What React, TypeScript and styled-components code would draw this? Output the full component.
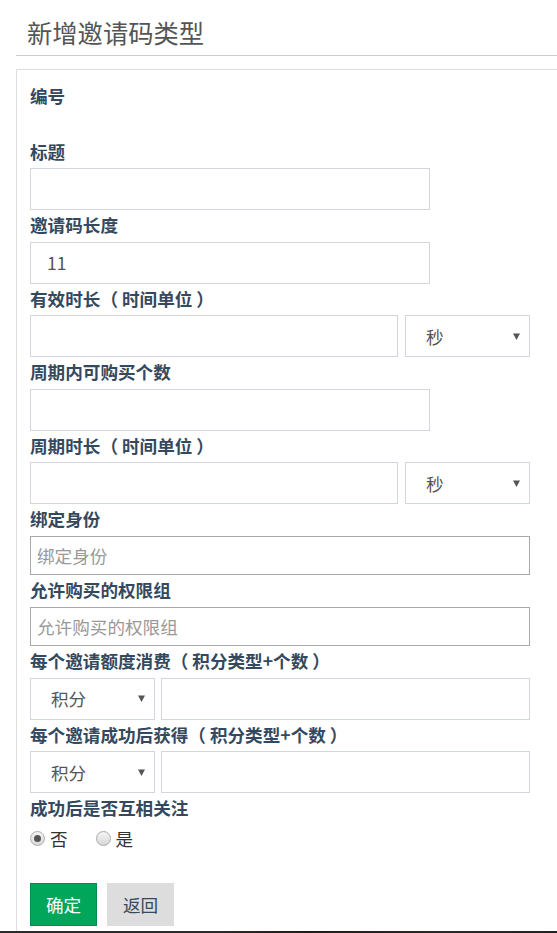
import React from "react";
import styled, { createGlobalStyle } from "styled-components";

const Global = createGlobalStyle`
  html, body { margin: 0; padding: 0; background: #fff; }
  body { font-family: "Noto Sans CJK SC", "Microsoft YaHei", sans-serif; overflow: hidden; }
  * { box-sizing: border-box; }
`;

const Header = styled.div`
  margin-left: 16px;
  padding: 19px 0 0 11px;
  height: 56px;
  border-bottom: 1px solid #cccccc;
`;

const Title = styled.h1`
  margin: 0;
  font-size: 25.3px;
  line-height: 26px;
  font-weight: 400;
  color: #555;
`;

const Card = styled.div`
  margin: 13px 0 0 16px;
  border-top: 1px solid #dddddd;
  border-left: 1px solid #dddddd;
  padding: 11px 0 5px 13px;
`;

const Label = styled.div`
  font-size: 17.6px;
  line-height: 22.5px;
  font-weight: 700;
  color: #34495e;
  margin: 4px 0 5px;
  white-space: pre;
`;

const EmptyValue = styled.div`
  height: 24px;
`;

const TextInput = styled.div<{ $w?: number; $h?: number; $dark?: boolean; $pad?: number }>`
  width: ${(p) => (p.$w ? `${p.$w}px` : "auto")};
  flex: ${(p) => (p.$w ? "none" : "1")};
  height: ${(p) => p.$h ?? 42}px;
  border: 1px solid ${(p) => (p.$dark ? "#a9a9a9" : "#d2d6de")};
  padding-left: ${(p) => p.$pad ?? 16}px;
  display: flex;
  align-items: center;
  font-size: 17.6px;
  color: #555;
`;

const Placeholder = styled.span`
  color: #999;
`;

const Row = styled.div<{ $gap: number }>`
  width: 500px;
  display: flex;
  gap: ${(p) => p.$gap}px;
`;

const Select = styled.div`
  width: 125px;
  flex: none;
  height: 42px;
  border: 1px solid #d2d6de;
  padding: 0 9px 0 20px;
  display: flex;
  align-items: center;
  justify-content: space-between;
  font-size: 17.6px;
  color: #555;
`;

const Caret = () => (
  <svg width="7" height="7" viewBox="0 0 7 7">
    <path d="M0 0.5 L7 0.5 L3.5 7 Z" fill="#555" />
  </svg>
);

const RadioRow = styled.div`
  height: 28px;
  display: flex;
  align-items: center;
  gap: 28px;
`;

const RadioItem = styled.label`
  display: flex;
  align-items: center;
  gap: 5px;
  font-size: 17.6px;
  color: #333;
`;

const RadioCircle = styled.span<{ $checked?: boolean }>`
  width: 15px;
  height: 15px;
  border-radius: 50%;
  border: 1px solid #aaa;
  background: linear-gradient(#f4f4f4, #d8d8d8);
  display: flex;
  align-items: center;
  justify-content: center;
  &::after {
    content: "";
    display: ${(p) => (p.$checked ? "block" : "none")};
    width: 7px;
    height: 7px;
    border-radius: 50%;
    background: #555;
  }
`;

const Buttons = styled.div`
  margin-top: 30.5px;
  display: flex;
  gap: 10px;
`;

const Button = styled.button<{ $primary?: boolean }>`
  width: 67px;
  height: 43px;
  font-family: inherit;
  font-size: 17.6px;
  border: 1px solid ${(p) => (p.$primary ? "#008d4c" : "#dddddd")};
  background: ${(p) => (p.$primary ? "#00a65a" : "#dddddd")};
  color: ${(p) => (p.$primary ? "#fff" : "#34495e")};
  padding: 0;
  border-radius: 0;
`;

const BottomStrip = styled.div`
  height: 10px;
  background: linear-gradient(90deg, #2b2b2b 0%, #2b2b2b 40%, #1f1c15 55%, #2a2a2a 80%, #222 100%);
`;

export default function App() {
  return (
    <>
      <Global />
      <Header>
        <Title>新增邀请码类型</Title>
      </Header>
      <Card>
        <Label>编号</Label>
        <EmptyValue />
        <Label>标题</Label>
        <TextInput $w={400} />
        <Label>邀请码长度</Label>
        <TextInput $w={400}>11</TextInput>
        <Label>有效时长（ 时间单位 ）</Label>
        <Row $gap={7}>
          <TextInput />
          <Select>
            <span>秒</span>
            <Caret />
          </Select>
        </Row>
        <Label>周期内可购买个数</Label>
        <TextInput $w={400} />
        <Label>周期时长（ 时间单位 ）</Label>
        <Row $gap={7}>
          <TextInput />
          <Select>
            <span>秒</span>
            <Caret />
          </Select>
        </Row>
        <Label>绑定身份</Label>
        <TextInput $w={500} $h={39.5} $dark $pad={6}>
          <Placeholder>绑定身份</Placeholder>
        </TextInput>
        <Label>允许购买的权限组</Label>
        <TextInput $w={500} $h={39.5} $dark $pad={6}>
          <Placeholder>允许购买的权限组</Placeholder>
        </TextInput>
        <Label>每个邀请额度消费（ 积分类型+个数 ）</Label>
        <Row $gap={6}>
          <Select>
            <span>积分</span>
            <Caret />
          </Select>
          <TextInput />
        </Row>
        <Label>每个邀请成功后获得（ 积分类型+个数 ）</Label>
        <Row $gap={6}>
          <Select>
            <span>积分</span>
            <Caret />
          </Select>
          <TextInput />
        </Row>
        <Label>成功后是否互相关注</Label>
        <RadioRow>
          <RadioItem>
            <RadioCircle $checked />否
          </RadioItem>
          <RadioItem>
            <RadioCircle />是
          </RadioItem>
        </RadioRow>
        <Buttons>
          <Button $primary>确定</Button>
          <Button>返回</Button>
        </Buttons>
      </Card>
      <BottomStrip />
    </>
  );
}
